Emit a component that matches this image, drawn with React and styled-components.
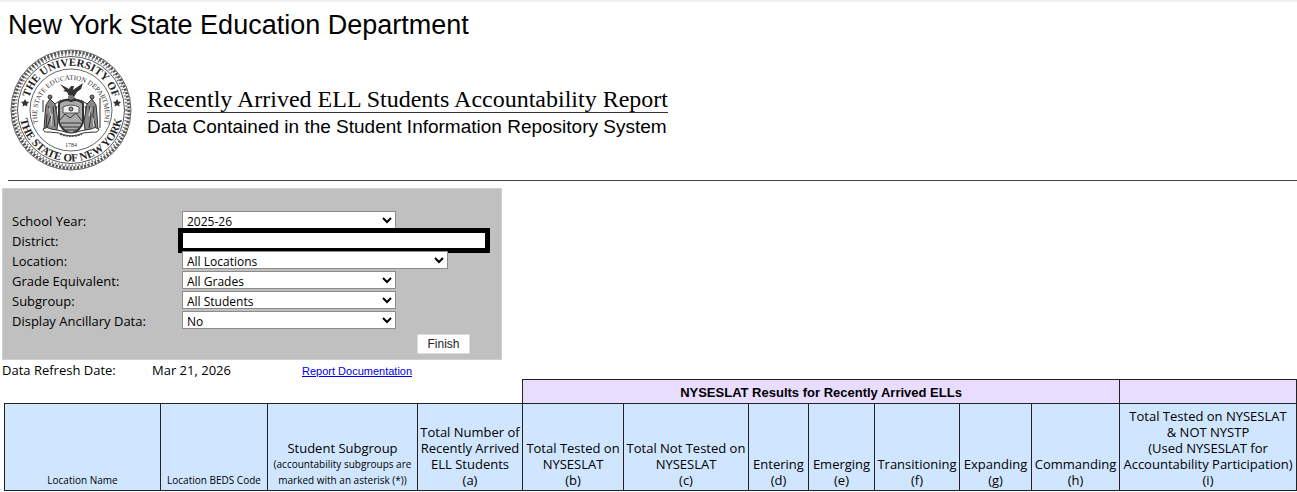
import React, { useState } from 'react'
import styled, { createGlobalStyle } from 'styled-components';

const GlobalStyle = createGlobalStyle`
  * {
    box-sizing: border-box;
  }

  body {
    margin: 0;
    background: #fff;
    color: #000;
    font-family: "Open Sans", "Noto Sans", sans-serif;
    font-size: 13px;
  }
`;

const Page = styled.main`
  display: flex;
  flex-direction: column;
`;

const TopStrip = styled.div`
  height: 2px;
  background: #f1f1f1;
`;

const Header = styled.header`
  margin-left: 8px;
  padding-top: 7px;
  border-bottom: 1px solid #444;
`;

const Department = styled.h1`
  margin: 0;
  font: 27px/32px "Liberation Sans", Arial, sans-serif;
`;

const Brand = styled.div`
  display: flex;
  align-items: flex-start;
  gap: 15px;
  padding: 7px 0 8px 2px;

  & > svg {
    flex: none;
  }
`;

const Titles = styled.div`
  display: flex;
  flex-direction: column;
  align-items: flex-start;
  padding-top: 38px;
`;

const ReportTitle = styled.h2`
  margin: 0;
  border-bottom: 1px solid #333;
  font: 24px/26px "Liberation Serif", "Times New Roman", serif;
`;

const ReportSubtitle = styled.p`
  margin: 0;
  padding-top: 3px;
  font: 19px/22px "Liberation Sans", Arial, sans-serif;
`;

const FilterPanel = styled.form`
  width: 500px;
  max-width: 100%;
  margin: 7px 0 0 2px;
  padding: 20px 12px 5px 9px;
  border: 1px solid #d0d0d0;
  background: #c0c0c0;
`;

const FilterRow = styled.div`
  display: grid;
  grid-template-columns: 170px 1fr;
  align-items: center;
  height: 20px;
`;

const Label = styled.label`
  padding-top: 2px;
  line-height: 20px;
`;

const Select = styled.select`
  width: ${(props) => (props.$wide ? "266px" : "214px")};
  height: 18px;
  padding: 0;
  border: 1px solid #8c8c8c;
  border-radius: 0;
  background-color: #fff;
  color: #000;
  font: 12px "Open Sans", "Noto Sans", sans-serif;
`;

const DistrictInput = styled.input`
  width: 312px;
  height: 25px;
  margin: -2px 0 -3px -4px;
  border: 5px solid #000;
  background: #fff;
  outline: none;
`;

const Actions = styled.div`
  display: flex;
  justify-content: flex-end;
  padding: 5px 19px 0 0;
`;

const FinishButton = styled.button`
  width: 53px;
  height: 20px;
  padding: 0;
  border: 1px solid #dcdcdc;
  background: #fff;
  color: #222;
  font: 12px "Liberation Sans", Arial, sans-serif;
  cursor: pointer;
`;

const RefreshBar = styled.div`
  display: grid;
  grid-template-columns: 150px 150px 1fr;
  align-items: center;
  height: 19px;
  padding-left: 2px;
`;

const DocLink = styled.a`
  color: #0000ee;
  font: 11px "Liberation Sans", Arial, sans-serif;
`;

const Report = styled.table`
  width: calc(100% - 5px);
  margin: 0 1px 0 4px;
  table-layout: fixed;
  border-collapse: collapse;
`;

const Blank = styled.td`
  padding: 0;
`;

const GroupHead = styled.th`
  height: 24px;
  padding: 2px 0 0;
  border: 1px solid #222;
  background: #e8dcff;
  font: bold 13px/16px "Liberation Sans", Arial, sans-serif;
`;

const ColumnHead = styled.th`
  height: 87px;
  padding: 0 0 2px;
  border: 1px solid #222;
  background: #d0e6ff;
  vertical-align: bottom;
  text-align: center;
  white-space: nowrap;
  font-weight: normal;
  font-size: ${(props) => (props.$small ? "10px" : "13px")};
  line-height: 16px;
`;

const Line = styled.div`
  font-size: ${(props) => (props.$small ? "10px" : "inherit")};
`;

const filters = [
  { id: "year", label: "School Year:", options: ["2025-26", "2024-25"] },
  { id: "district", label: "District:" },
  { id: "location", label: "Location:", options: ["All Locations"], wide: true },
  { id: "grade", label: "Grade Equivalent:", options: ["All Grades"] },
  { id: "subgroup", label: "Subgroup:", options: ["All Students"] },
  { id: "ancillary", label: "Display Ancillary Data:", options: ["No", "Yes"] },
];

const columns = [
  { width: 156, small: true, lines: ["Location Name"] },
  { width: 107, small: true, lines: ["Location BEDS Code"] },
  {
    width: 150,
    lines: ["Student Subgroup"],
    notes: ["(accountability subgroups are", "marked with an asterisk (*))"],
  },
  { width: 105, lines: ["Total Number of", "Recently Arrived", "ELL Students", "(a)"] },
  { width: 101, lines: ["Total Tested on", "NYSESLAT", "(b)"] },
  { width: 125, lines: ["Total Not Tested on", "NYSESLAT", "(c)"] },
  { width: 60, lines: ["Entering", "(d)"] },
  { width: 66, lines: ["Emerging", "(e)"] },
  { width: 85, lines: ["Transitioning", "(f)"] },
  { width: 72, lines: ["Expanding", "(g)"] },
  { width: 88, lines: ["Commanding", "(h)"] },
  {
    width: 177,
    lines: ["Total Tested on NYSESLAT", "& NOT NYSTP", "(Used NYSESLAT for", "Accountability Participation)", "(i)"],
  },
];

const Seal = () => (
  <svg width="122" height="124" viewBox="0 0 122 124" role="img" aria-label="State seal">
    <defs>
      <path id="outerTop" d="M 18 68 A 43.500 43.500 0 1 1 104 68" />
      <path id="outerBottom" d="M 9.500 62 A 51.500 51.500 0 0 0 112.500 62" />
      <path id="innerTop" d="M 28 74 A 34 34 0 1 1 94 74" />
    </defs>
    <g fill="none" stroke="#555">
      <circle cx="61" cy="62" r="60" stroke="#666" strokeWidth="1" />
      <circle cx="61" cy="62" r="58" stroke="#555" strokeWidth="3" strokeDasharray="2.200 1.400" />
      <circle cx="61" cy="62" r="55.500" stroke="#777" strokeWidth="2" strokeDasharray="1.400 2" />
      <circle cx="61" cy="62" r="53.500" strokeWidth="1" />
      <circle cx="61" cy="62" r="41" stroke="#666" strokeWidth="1" />
    </g>
    <g fill="#222" fontFamily="Liberation Serif, Times New Roman, serif" textAnchor="middle">
      <text fontSize="11" fontWeight="bold">
        <textPath href="#outerTop" startOffset="50%">THE UNIVERSITY OF</textPath>
      </text>
      <text fontSize="11" fontWeight="bold">
        <textPath href="#outerBottom" startOffset="50%">THE STATE OF NEW YORK</textPath>
      </text>
      <text fontSize="7" fill="#333">
        <textPath href="#innerTop" startOffset="50%">THE STATE EDUCATION DEPARTMENT</textPath>
      </text>
      <text x="61" y="99" fontSize="6" fill="#333">1784</text>
    </g>
    <g fill="#333">
      <path d="M15 51l1.300 2.500 2.800.4-2 2 .4 2.700-2.500-1.300-2.500 1.300.5-2.700-2-2 2.700-.4z" />
      <path d="M107 51l1.300 2.500 2.800.4-2 2 .4 2.700-2.500-1.300-2.500 1.300.5-2.700-2-2 2.700-.4z" />
      {/* eagle over the globe */}
      <path d="M50 36l9 5 2-3 3 0-1 4 10-7-2 6-4 3-3 5 3 3h-10l2-4-2-4-4-1 2-1z" />
      <circle cx="61" cy="50" r="3" fill="#777" />
    </g>
    {/* shield and its two supporters */}
    <g stroke="#333">
      <path d="M49 55q6-5 12-2 6-3 12 2v19q-2 8-12 12-10-4-12-12z" fill="#aaa" strokeWidth="2" />
      <path d="M53 59q8-4 16 0v6H53z" fill="#eee" stroke="#555" strokeWidth="1" />
      <path d="M50 72l5-6 5 4 6-5 6 8M51 75h20M53 79h16M56 82h10M47 58l-2 8 2 10M75 58l2 8-2 10" fill="none" strokeWidth="1" />
      <circle cx="61" cy="61" r="2" fill="#999" strokeWidth="1" />
      <path d="M40 51l5 5 3 17-1 9H34l1-15 1-10z" fill="#888" strokeWidth="1" />
      <path d="M82 51l-5 5-3 17 1 9h13l-1-15-1-10z" fill="#888" strokeWidth="1" />
      <path d="M38 58l3 9-4 13M43 58l2 21M79 58l2 9-2 13M84 58l-1 10 3 12M37 66l-1 14M45 56l6-4M71 52l6 4M90 50v30M33 52v12" fill="none" strokeWidth="1" />
      <path d="M39 60l2 8M42 66l-1 12M81 60l-2 8M83 70l1 9" fill="none" stroke="#ddd" strokeWidth="1" />
      <circle cx="40" cy="49" r="2" fill="#777" strokeWidth="1" />
      <circle cx="82" cy="49" r="2" fill="#777" strokeWidth="1" />
      <path d="M33 81q4-3 8 0l11 2q9 4 18 0l11-2q4-3 8 0-1 4-6 3l-10 1q-12 6-24 0l-10-1q-5 1-6-3z" fill="#fff" strokeWidth="1" />
      <path d="M50 86q11 4 22 0" fill="none" stroke="#555" strokeWidth="2" strokeDasharray="2 1" />
    </g>
  </svg>
);

const Filters = () => {
  const [values, setValues] = useState({});

  const change = (e) => setValues({ ...values, [e.target.id]: e.target.value });

  return (
    <FilterPanel onSubmit={(e) => e.preventDefault()}>
      {filters.map((f) => (
        <FilterRow key={f.id}>
          <Label htmlFor={f.id}>{f.label}</Label>
          {f.options ? (
            <Select id={f.id} $wide={f.wide} value={values[f.id] || f.options[0]} onChange={change}>
              {f.options.map((o) => <option key={o}>{o}</option>)}
            </Select>
          ) : (
            <DistrictInput id={f.id} type="text" value={values[f.id] || ""} onChange={change} />
          )}
        </FilterRow>
      ))}
      <Actions>
        <FinishButton type="submit">Finish</FinishButton>
      </Actions>
    </FilterPanel>
  );
};

const ReportTable = () => (
  <Report>
    <colgroup>
      {columns.map((c, i) => <col key={i} width={c.width} />)}
    </colgroup>
    <thead>
      <tr>
        <Blank colSpan={4} />
        <GroupHead colSpan={7}>NYSESLAT Results for Recently Arrived ELLs</GroupHead>
        <GroupHead />
      </tr>
      <tr>
        {columns.map((c) => (
          <ColumnHead key={c.lines.join()} $small={c.small} scope="col">
            {c.lines.map((l) => <Line key={l}>{l}</Line>)}
            {c.notes && c.notes.map((l) => <Line key={l} $small>{l}</Line>)}
          </ColumnHead>
        ))}
      </tr>
    </thead>
  </Report>
);

const App = () => {
  return (
    <Page>
      <GlobalStyle />
      <TopStrip />
      <Header>
        <Department>New York State Education Department</Department>
        <Brand>
          <Seal />
          <Titles>
            <ReportTitle>Recently Arrived ELL Students Accountability Report</ReportTitle>
            <ReportSubtitle>Data Contained in the Student Information Repository System</ReportSubtitle>
          </Titles>
        </Brand>
      </Header>
      <Filters />
      <RefreshBar>
        <span>Data Refresh Date:</span>
        <span>Mar 21, 2026</span>
        <span><DocLink href="#documentation">Report Documentation</DocLink></span>
      </RefreshBar>
      <ReportTable />
    </Page>
  )
}

export default App;
